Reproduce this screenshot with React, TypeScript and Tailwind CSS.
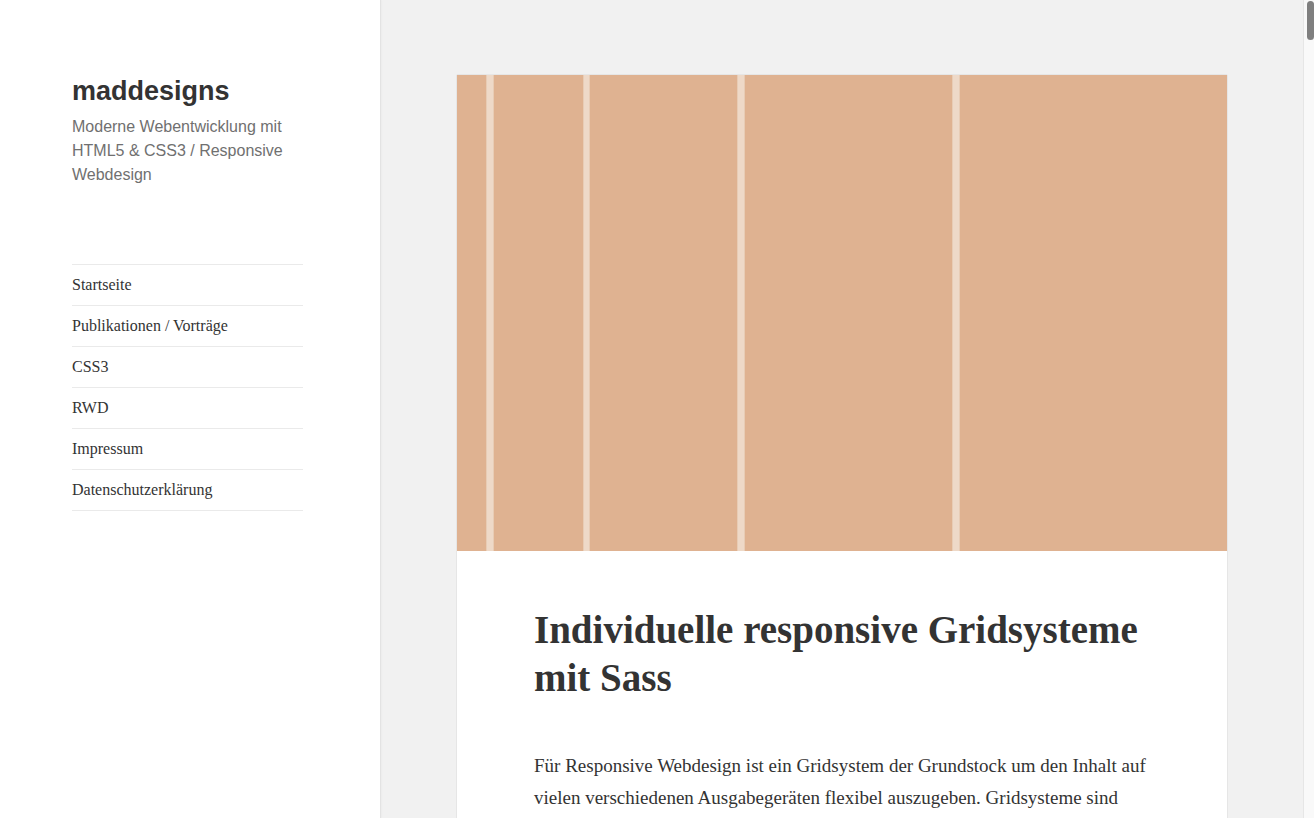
import React from "react";

const navItems = [
  "Startseite",
  "Publikationen / Vorträge",
  "CSS3",
  "RWD",
  "Impressum",
  "Datenschutzerklärung",
];

function Stripe({ w }: { w: string }) {
  return <div className={`${w} h-full bg-[#eed9c8] border-x border-[#e8ccb5]`} />;
}

export default function App() {
  return (
    <div className="flex h-[818px] w-full overflow-hidden bg-[#f1f1f1]">
      <aside className="w-[381px] shrink-0 bg-white border-r border-[#e3e3e3] shadow-[0_0_2px_rgba(0,0,0,0.06)] pl-[72px] pt-[76px]">
        <div className="w-[231px]">
          <h1
            className="text-[27px] leading-[30px] font-bold text-[#333333]"
            style={{ fontFamily: '"Liberation Sans", Arial, sans-serif' }}
          >
            maddesigns
          </h1>
          <p
            className="mt-[9px] text-[16px] leading-[24px] text-[#707070]"
            style={{ fontFamily: '"Liberation Sans", Arial, sans-serif' }}
          >
            Moderne Webentwicklung mit HTML5 &amp; CSS3 / Responsive Webdesign
          </p>
          <nav className="mt-[77px] border-t border-[#eaeaea]">
            {navItems.map((item) => (
              <div
                key={item}
                className="h-[41px] flex items-center border-b border-[#eaeaea] text-[16px] text-[#333333]"
                style={{ fontFamily: '"Liberation Serif", "Times New Roman", serif' }}
              >
                {item}
              </div>
            ))}
          </nav>
        </div>
      </aside>
      <main className="flex-1 flex justify-center pt-[75px]">
        <article className="w-[770px] h-fit bg-white shadow-[0_0_1px_rgba(0,0,0,0.25)]">
          <div className="h-[476px] flex bg-[#dfb291]">
            <div className="w-[29px]" />
            <Stripe w="w-[8px]" />
            <div className="w-[89px]" />
            <Stripe w="w-[7px]" />
            <div className="w-[147px]" />
            <Stripe w="w-[8px]" />
            <div className="w-[207px]" />
            <Stripe w="w-[8px]" />
            <div className="flex-1" />
          </div>
          <div
            className="px-[77px] pt-[55px] text-[#333333]"
            style={{ fontFamily: '"Liberation Serif", "Times New Roman", serif' }}
          >
            <h2 className="text-[39px] leading-[48px] font-bold">
              Individuelle responsive Gridsysteme mit Sass
            </h2>
            <p className="mt-[48px] text-[19px] leading-[32px]">
              Für Responsive Webdesign ist ein Gridsystem der Grundstock um den Inhalt auf
              vielen verschiedenen Ausgabegeräten flexibel auszugeben. Gridsysteme sind
              heute ein wichtiger Bestandteil moderner Webseiten und CSS-Frameworks.
            </p>
          </div>
        </article>
      </main>
      <div className="w-[11px] shrink-0 bg-[#f9f9f9] border-l border-[#e6e6e6] pl-[3px] pt-[1px]">
        <div className="w-[7px] h-[39px] rounded-full bg-[#7f7f7f]" />
      </div>
    </div>
  );
}
